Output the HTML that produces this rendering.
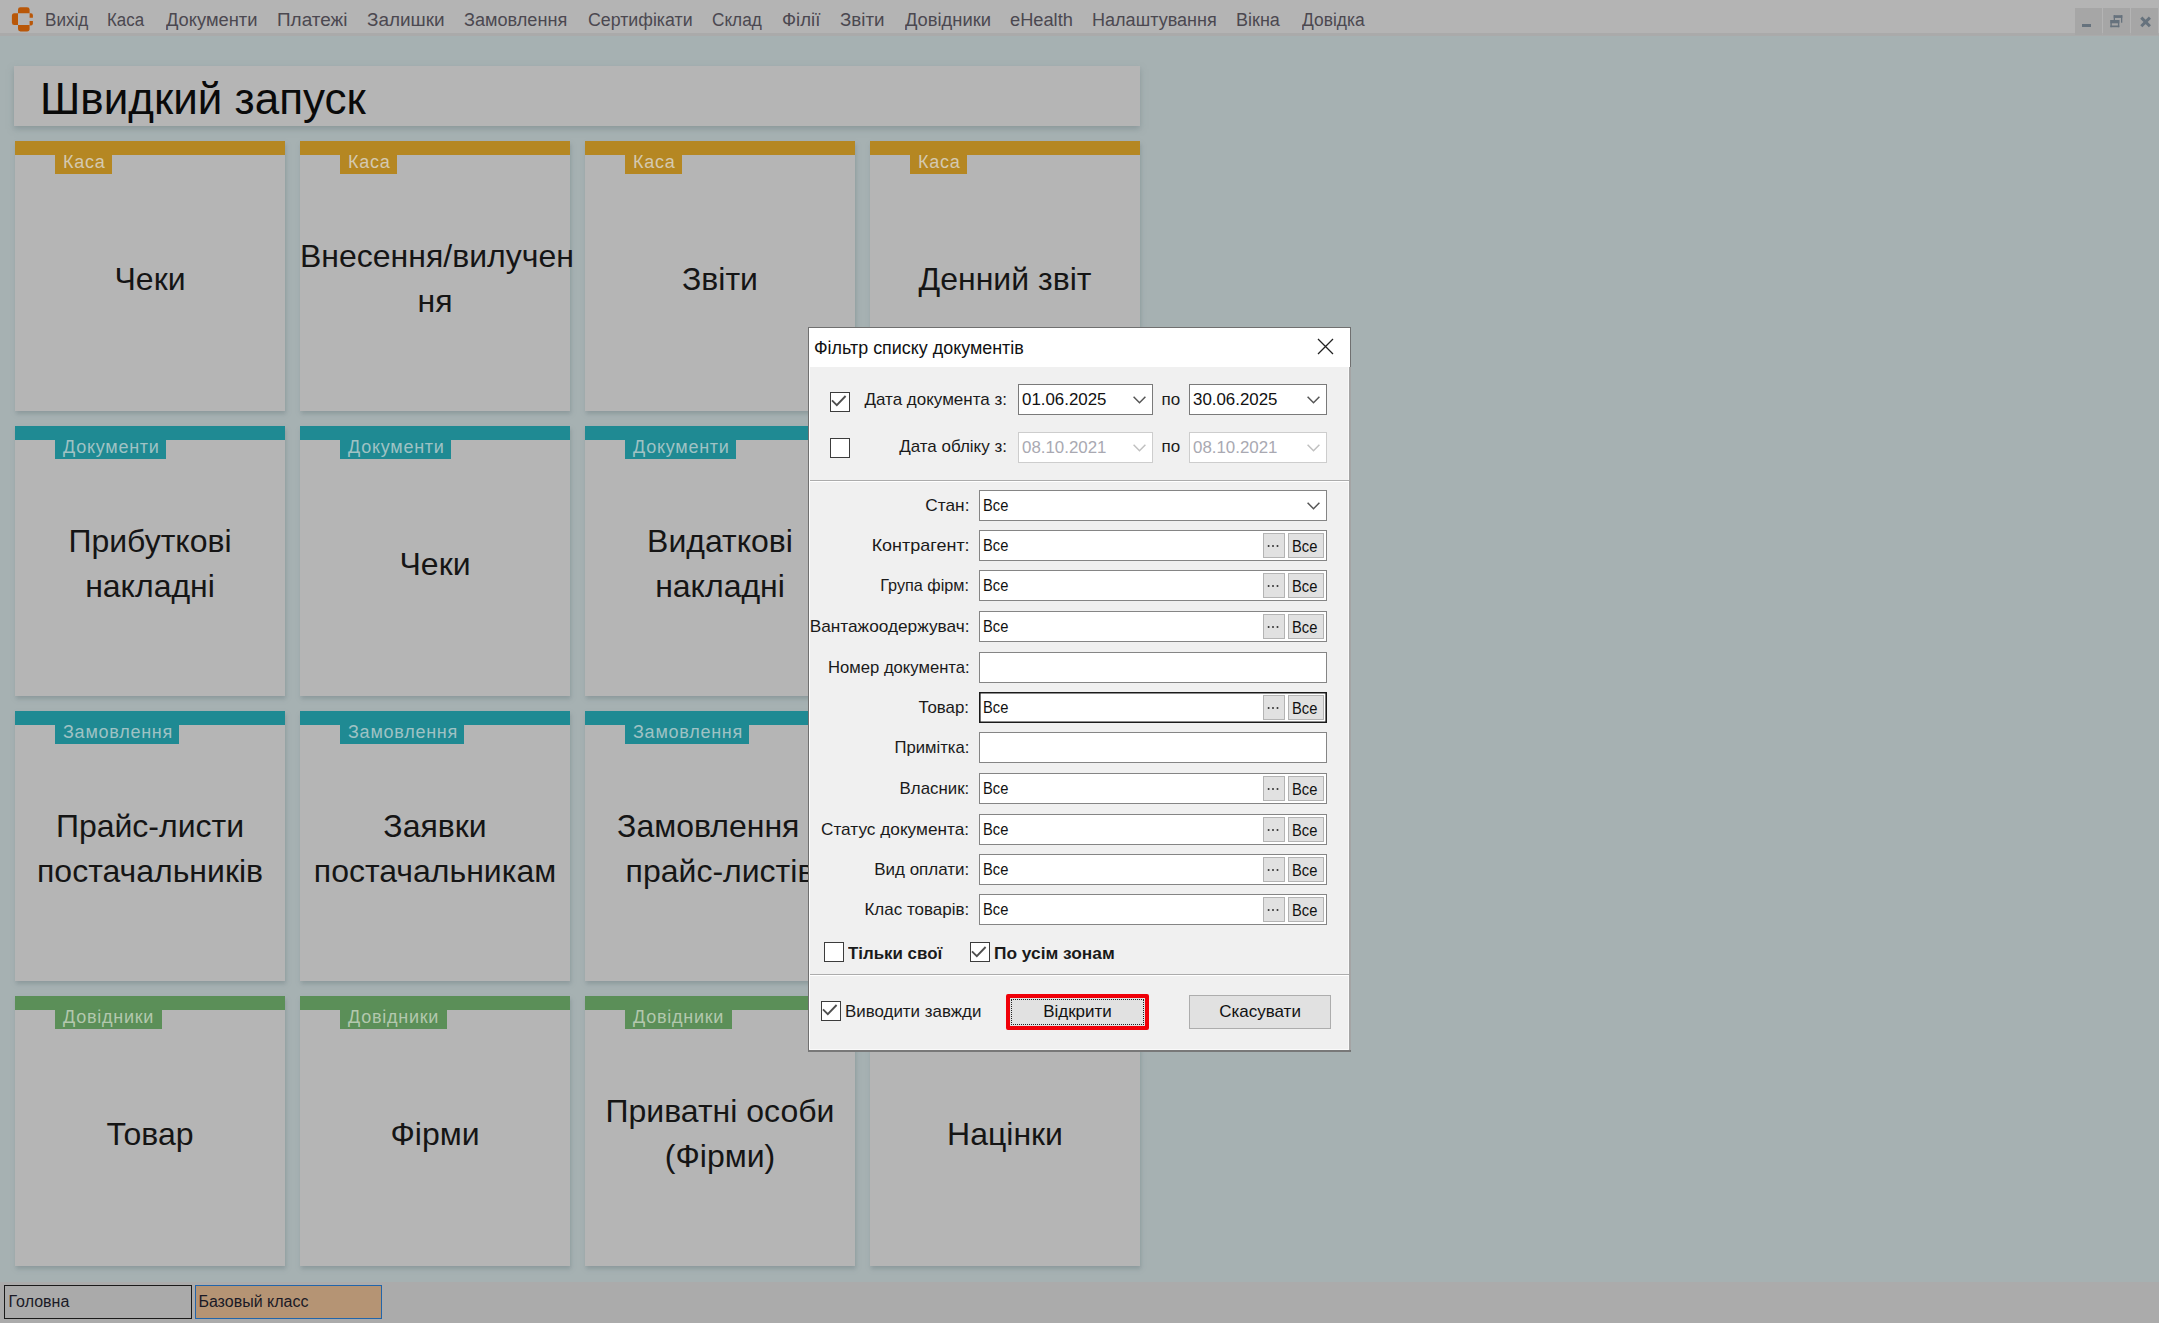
<!DOCTYPE html>
<html><head><meta charset="utf-8">
<style>
*{margin:0;padding:0;box-sizing:border-box}
html,body{width:2159px;height:1323px;overflow:hidden;background:#a6b1b2;font-family:"Liberation Sans",sans-serif;position:relative}
.abs{position:absolute}
#menubar{left:0;top:0;width:2159px;height:36px;background:#b4b4b4;border-bottom:3px solid #aaaaaa}
.mi{position:absolute;top:9.3px;font-size:18px;color:#4b4850;white-space:nowrap;line-height:22px}
.wb{position:absolute;top:8px;width:26.5px;height:27px;background:#a6a6a6}
#hdr{left:14px;top:66px;width:1126px;height:60px;background:#b5b5b5;box-shadow:0 3px 6px rgba(120,135,138,0.6)}
.tile{position:absolute;width:270px;height:270px;background:#b5b5b5;box-shadow:1px 3px 4px rgba(125,140,143,0.6)}
.bar{position:absolute;left:0;top:0;width:270px;height:13.5px}
.tag{position:absolute;left:40px;top:13.4px;height:19.6px;font-size:18px;line-height:16.5px;padding:0 0 0 8px;white-space:nowrap;letter-spacing:0.75px;overflow:hidden}
.gold .bar,.gold .tag{background:#b58722}
.gold .tag{color:#d4c9b0}
.teal .bar,.teal .tag{background:#1f8a93}
.teal .tag{color:#9fc2c4}
.green .bar,.green .tag{background:#5b8f58}
.green .tag{color:#b3c8ae}
.tt{position:absolute;left:0;margin-top:1.5px;width:270px;text-align:center;font-size:32px;line-height:44.5px;color:#151515;white-space:nowrap}
#status{left:0;top:1282px;width:2159px;height:41px;background:#ababab}
.stab{position:absolute;top:1284.5px;height:34px;font-size:16px;line-height:31px;padding-left:2.5px;color:#1a1a26}
#dlg{left:808px;top:327px;width:543px;height:725px;background:#f0f0f0;border:1px solid #707070;border-bottom:2px solid #787878}
#dtitle{left:0;top:0;width:541px;height:39px;background:#fff}
.lbl{position:absolute;font-size:17px;color:#1a1a1a;white-space:nowrap;line-height:20px}
.inp{position:absolute;background:#fff;border:1px solid #858585;height:31px}
.inp .v{position:absolute;left:3px;top:5px;font-size:17px;line-height:20px;color:#111;white-space:nowrap}
.dd{position:absolute;right:6px;top:11px;width:13px;height:8px}
.b3{position:absolute;top:2px;width:22px;height:25px;background:#e1e1e1;border:1px solid #b4b4b4}
.ball{position:absolute;top:2px;width:36px;height:25px;background:#e1e1e1;border:1px solid #b4b4b4;font-size:17px;line-height:20px;color:#111}
.cb{position:absolute;width:20px;height:20px;background:#fff;border:1.6px solid #3c3c3c}
.sep{position:absolute;left:1px;width:539px;height:2.3px;background:#acacac;border-bottom:1px solid #fff}
.btn{position:absolute;background:#e1e1e1;border:1px solid #adadad;font-size:17px;text-align:center;color:#111}
</style></head>
<body>
<div id="menubar" class="abs">
  <svg class="abs" style="left:11px;top:7px" width="23" height="25" viewBox="0 0 23 25">
    <g fill="#b95708">
      <path d="M7 6.3V2.5Q7 0.3 9.5 0.3H16Q18.6 0.3 18.6 2.5V6.3Z"/>
      <path d="M7 6.3V18H3.2Q0.9 18 0.9 15.5V9Q0.9 6.3 3.2 6.3Z"/>
      <path d="M7 18V22Q7 24.4 9.5 24.4H16Q18.6 24.4 18.6 22V18Z"/>
      <path d="M18.6 6.3H20Q21.9 6.3 21.9 8.3V10.8H18.6Z"/>
      <path d="M18.6 13.9H21.9V16.2Q21.9 18.4 20 18.4H18.6Z"/>
    </g>
  </svg>
  <span class="mi" style="left:44.60px;transform:scaleX(0.9502);transform-origin:0 0;">Вихід</span>
  <span class="mi" style="left:107.00px;transform:scaleX(0.9372);transform-origin:0 0;">Каса</span>
  <span class="mi" style="left:166.00px;transform:scaleX(1.0171);transform-origin:0 0;">Документи</span>
  <span class="mi" style="left:277.20px;transform:scaleX(1.0516);transform-origin:0 0;">Платежі</span>
  <span class="mi" style="left:367.20px;transform:scaleX(1.0522);transform-origin:0 0;">Залишки</span>
  <span class="mi" style="left:464.40px;transform:scaleX(1.0070);transform-origin:0 0;">Замовлення</span>
  <span class="mi" style="left:587.60px;transform:scaleX(0.9874);transform-origin:0 0;">Сертифікати</span>
  <span class="mi" style="left:711.80px;transform:scaleX(0.9548);transform-origin:0 0;">Склад</span>
  <span class="mi" style="left:782.00px;transform:scaleX(1.0307);transform-origin:0 0;">Філії</span>
  <span class="mi" style="left:840.00px;transform:scaleX(1.0420);transform-origin:0 0;">Звіти</span>
  <span class="mi" style="left:904.60px;transform:scaleX(1.0181);transform-origin:0 0;">Довідники</span>
  <span class="mi" style="left:1010.00px;transform:scaleX(1.0134);transform-origin:0 0;">eHealth</span>
  <span class="mi" style="left:1091.60px;transform:scaleX(1.0033);transform-origin:0 0;">Налаштування</span>
  <span class="mi" style="left:1236.00px;">Вікна</span>
  <span class="mi" style="left:1302.00px;transform:scaleX(0.9662);transform-origin:0 0;">Довідка</span>
  <div class="wb" style="left:2075px"><div class="abs" style="left:7px;top:16px;width:9px;height:3px;background:#66727d"></div></div>
  <div class="wb" style="left:2103px">
    <svg class="abs" style="left:0;top:0" width="27" height="27" viewBox="0 0 27 27"><g fill="#66727d">
      <rect x="10.7" y="7.2" width="8.6" height="2.7"/><rect x="18" y="7.2" width="1.3" height="7.5"/><rect x="10.7" y="7.2" width="1.3" height="4.8"/>
      <rect x="7.4" y="12" width="8.9" height="3.3"/><rect x="7.4" y="12" width="1.4" height="7.2"/><rect x="14.9" y="12" width="1.4" height="7.2"/><rect x="7.4" y="17.5" width="8.9" height="1.7"/>
    </g></svg>
  </div>
  <div class="wb" style="left:2131px">
    <svg class="abs" style="left:0;top:0" width="27" height="27" viewBox="0 0 27 27"><path d="M10.3 9.6L18.9 18.2M18.9 9.6L10.3 18.2" stroke="#66727d" stroke-width="3"/></svg>
  </div>
</div>
<div id="hdr" class="abs"></div>
<div class="abs" style="left:40px;top:72px;font-size:44px;line-height:54px;color:#0a0a0a;white-space:nowrap">Швидкий запуск</div>
<div class="tile gold" style="left:15px;top:141px"><div class="bar"></div><div class="tag" style="width:57px">Каса</div><div class="tt" style="top:114.05px">Чеки</div></div>
<div class="tile gold" style="left:300px;top:141px"><div class="bar"></div><div class="tag" style="width:57px">Каса</div><div class="tt" style="top:91.80px">Внесення/вилучен<br>ня</div></div>
<div class="tile gold" style="left:585px;top:141px"><div class="bar"></div><div class="tag" style="width:57px">Каса</div><div class="tt" style="top:114.05px">Звіти</div></div>
<div class="tile gold" style="left:870px;top:141px"><div class="bar"></div><div class="tag" style="width:57px">Каса</div><div class="tt" style="top:114.05px">Денний звіт</div></div>
<div class="tile teal" style="left:15px;top:426px"><div class="bar"></div><div class="tag" style="width:111px">Документи</div><div class="tt" style="top:91.80px">Прибуткові<br>накладні</div></div>
<div class="tile teal" style="left:300px;top:426px"><div class="bar"></div><div class="tag" style="width:111px">Документи</div><div class="tt" style="top:114.05px">Чеки</div></div>
<div class="tile teal" style="left:585px;top:426px"><div class="bar"></div><div class="tag" style="width:111px">Документи</div><div class="tt" style="top:91.80px">Видаткові<br>накладні</div></div>
<div class="tile teal" style="left:870px;top:426px"><div class="bar"></div><div class="tag" style="width:111px">Документи</div><div class="tt" style="top:114.05px">Повернення</div></div>
<div class="tile teal" style="left:15px;top:711px"><div class="bar"></div><div class="tag" style="width:124px">Замовлення</div><div class="tt" style="top:91.80px">Прайс-листи<br>постачальників</div></div>
<div class="tile teal" style="left:300px;top:711px"><div class="bar"></div><div class="tag" style="width:124px">Замовлення</div><div class="tt" style="top:91.80px">Заявки<br>постачальникам</div></div>
<div class="tile teal" style="left:585px;top:711px"><div class="bar"></div><div class="tag" style="width:124px">Замовлення</div><div class="tt" style="top:91.80px">Замовлення з<br>прайс-листів</div></div>
<div class="tile teal" style="left:870px;top:711px"><div class="bar"></div><div class="tag" style="width:124px">Замовлення</div><div class="tt" style="top:114.05px">Замовлення</div></div>
<div class="tile green" style="left:15px;top:996px"><div class="bar"></div><div class="tag" style="width:107px">Довідники</div><div class="tt" style="top:114.05px">Товар</div></div>
<div class="tile green" style="left:300px;top:996px"><div class="bar"></div><div class="tag" style="width:107px">Довідники</div><div class="tt" style="top:114.05px">Фірми</div></div>
<div class="tile green" style="left:585px;top:996px"><div class="bar"></div><div class="tag" style="width:107px">Довідники</div><div class="tt" style="top:91.80px">Приватні особи<br>(Фірми)</div></div>
<div class="tile green" style="left:870px;top:996px"><div class="bar"></div><div class="tag" style="width:107px">Довідники</div><div class="tt" style="top:114.05px">Націнки</div></div>
<div id="status" class="abs"></div>
<div class="stab" style="left:4px;width:188px;background:#aaaaaa;border:1.8px solid #1a1a1a;padding-left:3.5px">Головна</div>
<div class="stab" style="left:195px;width:187px;background:#b59474;border:1.7px solid #2265aa;padding-left:2.4px">Базовый класс</div>
<div id="dlg" class="abs">
<div id="dtitle" class="abs"></div>
<div class="abs" style="left:0;top:39px;width:1px;height:683px;background:#fff"></div>
<div class="abs" style="left:0;top:721px;width:540px;height:1px;background:#fafafa"></div>
<div class="abs" style="left:539px;top:39px;width:1px;height:683px;background:#f8f8f8"></div>
<div class="abs" style="left:540px;top:39px;width:2px;height:683px;background:#a4a4a4"></div>
<div class="abs" style="left:5px;top:9px;font-size:18px;line-height:22px;color:#111;white-space:nowrap;transform:scaleX(0.9952);transform-origin:0 0;">Фільтр списку документів</div>
<svg class="abs" style="left:508px;top:10px" width="17" height="17" viewBox="0 0 17 17"><path d="M1 1L16 16M16 1L1 16" stroke="#222" stroke-width="1.3"/></svg>
<div class="cb" style="left:21px;top:63.60000000000002px"><svg class="abs" style="left:-1.6px;top:-1.6px" width="20" height="20" viewBox="0 0 20 20"><path d="M3 9.4L7.8 14.2L16.6 5" fill="none" stroke="#4e4e4e" stroke-width="1.85"/></svg></div>
<div class="cb" style="left:21px;top:110px"></div>
<div class="lbl" style="right:343.0px;top:61.5px;;transform-origin:100% 0">Дата документа з:</div>
<div class="lbl" style="right:343.0px;top:109px;;transform-origin:100% 0">Дата обліку з:</div>
<div class="inp" style="left:209px;top:56px;width:135px;border-color:#7a7a7a"><span class="v" style="color:#111;transform:scaleX(0.9930);transform-origin:0 0;">01.06.2025</span><svg class="dd" viewBox="0 0 13 8"><path d="M0.6 0.8L6.5 6.8L12.4 0.8" fill="none" stroke="#555" stroke-width="1.5"/></svg></div>
<div class="inp" style="left:380px;top:56px;width:138px;border-color:#7a7a7a"><span class="v" style="color:#111;transform:scaleX(0.9930);transform-origin:0 0;">30.06.2025</span><svg class="dd" viewBox="0 0 13 8"><path d="M0.6 0.8L6.5 6.8L12.4 0.8" fill="none" stroke="#555" stroke-width="1.5"/></svg></div>
<div class="inp" style="left:209px;top:104px;width:135px;border-color:#cdcdcd"><span class="v" style="color:#a9a9b2;transform:scaleX(0.9930);transform-origin:0 0;">08.10.2021</span><svg class="dd" viewBox="0 0 13 8"><path d="M0.6 0.8L6.5 6.8L12.4 0.8" fill="none" stroke="#c0c0c0" stroke-width="1.5"/></svg></div>
<div class="inp" style="left:380px;top:104px;width:138px;border-color:#cdcdcd"><span class="v" style="color:#a9a9b2;transform:scaleX(0.9930);transform-origin:0 0;">08.10.2021</span><svg class="dd" viewBox="0 0 13 8"><path d="M0.6 0.8L6.5 6.8L12.4 0.8" fill="none" stroke="#c0c0c0" stroke-width="1.5"/></svg></div>
<div class="lbl" style="left:352.5px;top:61.5px">по</div>
<div class="lbl" style="left:352.5px;top:109px">по</div>
<div class="sep" style="top:152px"></div>
<div class="lbl" style="right:380.7px;top:167.5px;transform:scaleX(1.0144);transform-origin:0 0;;transform-origin:100% 0">Стан:</div>
<div class="inp" style="left:170px;top:162px;width:348px;border-color:#858585"><span class="v" style="transform:scaleX(0.8646);transform-origin:0 0;">Все</span><svg class="dd" viewBox="0 0 13 8"><path d="M0.6 0.8L6.5 6.8L12.4 0.8" fill="none" stroke="#555" stroke-width="1.5"/></svg></div>
<div class="lbl" style="right:380.7px;top:207.5px;transform:scaleX(1.0578);transform-origin:0 0;;transform-origin:100% 0">Контрагент:</div>
<div class="inp" style="left:170px;top:202px;width:348px;border-color:#858585"><span class="v" style="transform:scaleX(0.8646);transform-origin:0 0;">Все</span><div class="b3" style="left:282.7px"><svg class="abs" style="left:3.7px;top:9.6px" width="12" height="4"><circle cx="1.6" cy="2" r="1" fill="#333"/><circle cx="6" cy="2" r="1" fill="#333"/><circle cx="10.5" cy="2" r="1" fill="#333"/></svg></div><div class="ball" style="left:308px"><span class="abs" style="left:3px;top:3.2px;transform:scaleX(0.8646);transform-origin:0 0;">Все</span></div></div>
<div class="lbl" style="right:380.7px;top:247.5px;transform:scaleX(0.9550);transform-origin:0 0;;transform-origin:100% 0">Група фірм:</div>
<div class="inp" style="left:170px;top:242px;width:348px;border-color:#858585"><span class="v" style="transform:scaleX(0.8646);transform-origin:0 0;">Все</span><div class="b3" style="left:282.7px"><svg class="abs" style="left:3.7px;top:9.6px" width="12" height="4"><circle cx="1.6" cy="2" r="1" fill="#333"/><circle cx="6" cy="2" r="1" fill="#333"/><circle cx="10.5" cy="2" r="1" fill="#333"/></svg></div><div class="ball" style="left:308px"><span class="abs" style="left:3px;top:3.2px;transform:scaleX(0.8646);transform-origin:0 0;">Все</span></div></div>
<div class="lbl" style="right:380.7px;top:288.5px;transform:scaleX(1.0147);transform-origin:0 0;;transform-origin:100% 0">Вантажоодержувач:</div>
<div class="inp" style="left:170px;top:283px;width:348px;border-color:#858585"><span class="v" style="transform:scaleX(0.8646);transform-origin:0 0;">Все</span><div class="b3" style="left:282.7px"><svg class="abs" style="left:3.7px;top:9.6px" width="12" height="4"><circle cx="1.6" cy="2" r="1" fill="#333"/><circle cx="6" cy="2" r="1" fill="#333"/><circle cx="10.5" cy="2" r="1" fill="#333"/></svg></div><div class="ball" style="left:308px"><span class="abs" style="left:3px;top:3.2px;transform:scaleX(0.8646);transform-origin:0 0;">Все</span></div></div>
<div class="lbl" style="right:380.7px;top:329.5px;transform:scaleX(0.9789);transform-origin:0 0;;transform-origin:100% 0">Номер документа:</div>
<div class="inp" style="left:170px;top:324px;width:348px;border-color:#858585"></div>
<div class="lbl" style="right:380.7px;top:369.5px;transform:scaleX(0.9920);transform-origin:0 0;;transform-origin:100% 0">Товар:</div>
<div class="inp" style="left:170px;top:364px;width:348px;border-color:#1a1a1a;box-shadow:inset 0 0 0 0.6px #1a1a1a"><span class="v" style="transform:scaleX(0.8646);transform-origin:0 0;">Все</span><div class="b3" style="left:282.7px"><svg class="abs" style="left:3.7px;top:9.6px" width="12" height="4"><circle cx="1.6" cy="2" r="1" fill="#333"/><circle cx="6" cy="2" r="1" fill="#333"/><circle cx="10.5" cy="2" r="1" fill="#333"/></svg></div><div class="ball" style="left:308px"><span class="abs" style="left:3px;top:3.2px;transform:scaleX(0.8646);transform-origin:0 0;">Все</span></div></div>
<div class="lbl" style="right:380.7px;top:409.5px;transform:scaleX(0.9797);transform-origin:0 0;;transform-origin:100% 0">Примітка:</div>
<div class="inp" style="left:170px;top:404px;width:348px;border-color:#858585"></div>
<div class="lbl" style="right:380.7px;top:450.5px;transform:scaleX(0.9914);transform-origin:0 0;;transform-origin:100% 0">Власник:</div>
<div class="inp" style="left:170px;top:445px;width:348px;border-color:#858585"><span class="v" style="transform:scaleX(0.8646);transform-origin:0 0;">Все</span><div class="b3" style="left:282.7px"><svg class="abs" style="left:3.7px;top:9.6px" width="12" height="4"><circle cx="1.6" cy="2" r="1" fill="#333"/><circle cx="6" cy="2" r="1" fill="#333"/><circle cx="10.5" cy="2" r="1" fill="#333"/></svg></div><div class="ball" style="left:308px"><span class="abs" style="left:3px;top:3.2px;transform:scaleX(0.8646);transform-origin:0 0;">Все</span></div></div>
<div class="lbl" style="right:380.7px;top:491.5px;transform:scaleX(1.0139);transform-origin:0 0;;transform-origin:100% 0">Статус документа:</div>
<div class="inp" style="left:170px;top:486px;width:348px;border-color:#858585"><span class="v" style="transform:scaleX(0.8646);transform-origin:0 0;">Все</span><div class="b3" style="left:282.7px"><svg class="abs" style="left:3.7px;top:9.6px" width="12" height="4"><circle cx="1.6" cy="2" r="1" fill="#333"/><circle cx="6" cy="2" r="1" fill="#333"/><circle cx="10.5" cy="2" r="1" fill="#333"/></svg></div><div class="ball" style="left:308px"><span class="abs" style="left:3px;top:3.2px;transform:scaleX(0.8646);transform-origin:0 0;">Все</span></div></div>
<div class="lbl" style="right:380.7px;top:531.5px;;transform-origin:100% 0">Вид оплати:</div>
<div class="inp" style="left:170px;top:526px;width:348px;border-color:#858585"><span class="v" style="transform:scaleX(0.8646);transform-origin:0 0;">Все</span><div class="b3" style="left:282.7px"><svg class="abs" style="left:3.7px;top:9.6px" width="12" height="4"><circle cx="1.6" cy="2" r="1" fill="#333"/><circle cx="6" cy="2" r="1" fill="#333"/><circle cx="10.5" cy="2" r="1" fill="#333"/></svg></div><div class="ball" style="left:308px"><span class="abs" style="left:3px;top:3.2px;transform:scaleX(0.8646);transform-origin:0 0;">Все</span></div></div>
<div class="lbl" style="right:380.7px;top:571.5px;;transform-origin:100% 0">Клас товарів:</div>
<div class="inp" style="left:170px;top:566px;width:348px;border-color:#858585"><span class="v" style="transform:scaleX(0.8646);transform-origin:0 0;">Все</span><div class="b3" style="left:282.7px"><svg class="abs" style="left:3.7px;top:9.6px" width="12" height="4"><circle cx="1.6" cy="2" r="1" fill="#333"/><circle cx="6" cy="2" r="1" fill="#333"/><circle cx="10.5" cy="2" r="1" fill="#333"/></svg></div><div class="ball" style="left:308px"><span class="abs" style="left:3px;top:3.2px;transform:scaleX(0.8646);transform-origin:0 0;">Все</span></div></div>
<div class="cb" style="left:15px;top:614.3px"></div>
<div class="lbl" style="left:39px;top:615.5px;font-weight:bold;transform:scaleX(0.9928);transform-origin:0 0;">Тільки свої</div>
<div class="cb" style="left:160.70000000000005px;top:614.3px"><svg class="abs" style="left:-1.6px;top:-1.6px" width="20" height="20" viewBox="0 0 20 20"><path d="M3 9.4L7.8 14.2L16.6 5" fill="none" stroke="#4e4e4e" stroke-width="1.85"/></svg></div>
<div class="lbl" style="left:185px;top:615.5px;font-weight:bold;transform:scaleX(1.0188);transform-origin:0 0;">По усім зонам</div>
<div class="sep" style="top:646px"></div>
<div class="cb" style="left:12px;top:673px"><svg class="abs" style="left:-1.6px;top:-1.6px" width="20" height="20" viewBox="0 0 20 20"><path d="M3 9.4L7.8 14.2L16.6 5" fill="none" stroke="#4e4e4e" stroke-width="1.85"/></svg></div>
<div class="lbl" style="left:35.60000000000002px;top:673.5px;transform:scaleX(0.9947);transform-origin:0 0;">Виводити завжди</div>
<div class="abs" style="left:197px;top:666.4px;width:143px;height:36px;border:4px solid #f00008;border-radius:2px;background:#e1e1e1"><div class="abs" style="left:1px;top:1px;width:133px;height:26px;border:1px dotted #222"></div><div class="abs" style="left:0;top:4px;width:135px;text-align:center;font-size:17px;line-height:20px;color:#111">Відкрити</div></div>
<div class="btn" style="left:380px;top:667px;width:142px;height:34px;line-height:32px">Скасувати</div>
</div>
</body></html>
